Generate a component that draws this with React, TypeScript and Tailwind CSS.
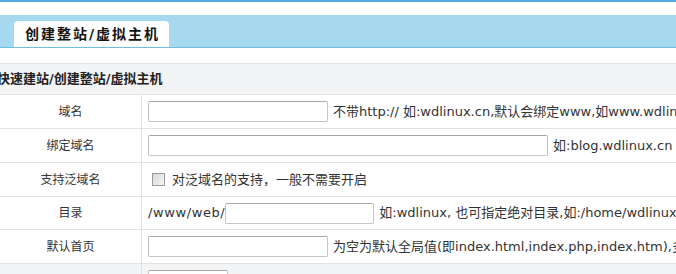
const font = { fontFamily: '"DejaVu Sans", "Noto Sans CJK SC", sans-serif' };

function Field({ w }: { w: string }) {
  return (
    <input
      type="text"
      className={`h-[21px] shrink-0 border border-[#c4c4c4] border-t-[#a8a8a8] bg-white rounded-[2px] outline-none ${w}`}
    />
  );
}

function Row({
  label,
  children,
  gray,
  h = "h-[34px]",
}: {
  label: string;
  children?: React.ReactNode;
  gray?: boolean;
  h?: string;
}) {
  return (
    <div className={`flex ${h} border-b border-[#e3e3e3] ${gray ? "bg-[#f3f4f5]" : "bg-white"}`}>
      <div className="w-[142px] shrink-0 flex items-center justify-center border-r border-[#e3e3e3] text-[12px]">
        {label}
      </div>
      <div className="flex items-center pl-[6px] whitespace-nowrap overflow-hidden text-[13px]">{children}</div>
    </div>
  );
}

export default function App() {
  return (
    <div className="w-[676px] h-[274px] overflow-hidden bg-white text-[#333]" style={font}>
      <div className="h-[2px] bg-[#54a9db]" />
      <div className="h-[13px]" />
      <div className="h-[33px] bg-[#a6d8ef] border-b border-[#6fbde2] flex items-end pl-[14px]">
        <div className="h-[26px] w-[155px] bg-white rounded-t-[4px] flex items-center pl-[11px] font-bold text-[14px] text-[#111] tracking-[2px] whitespace-nowrap">
          创建整站/虚拟主机
        </div>
      </div>
      <div className="h-[15px]" />
      <div className="h-[32px] bg-[#f3f4f5] border-t border-b border-[#e3e3e3] flex items-center font-bold text-[13px] text-[#222] whitespace-nowrap">
        <span className="-ml-[3px]">快速建站/创建整站/虚拟主机</span>
      </div>
      <Row label="域名">
        <Field w="w-[180px]" />
        <span className="ml-[5px]">不带http:// 如:wdlinux.cn,默认会绑定www,如www.wdlinux.cn</span>
      </Row>
      <Row label="绑定域名">
        <Field w="w-[400px]" />
        <span className="ml-[5px]">如:blog.wdlinux.cn</span>
      </Row>
      <Row label="支持泛域名">
        <span className="ml-[4px] w-[13px] h-[13px] border border-[#9a9a9a] bg-gradient-to-br from-[#d8d8d8] to-[#f6f6f6] shrink-0" />
        <span className="ml-[7px]">对泛域名的支持，一般不需要开启</span>
      </Row>
      <Row label="目录" h="h-[33px]">
        <span className="tracking-[0.6px]">/www/web/</span>
        <Field w="w-[149px]" />
        <span className="ml-[5px]">如:wdlinux, 也可指定绝对目录,如:/home/wdlinux</span>
      </Row>
      <Row label="默认首页">
        <Field w="w-[180px]" />
        <span className="ml-[5px]">为空为默认全局值(即index.html,index.php,index.htm),多个用逗号隔开</span>
      </Row>
      <Row label="" gray>
        <Field w="w-[80px]" />
      </Row>
    </div>
  );
}
